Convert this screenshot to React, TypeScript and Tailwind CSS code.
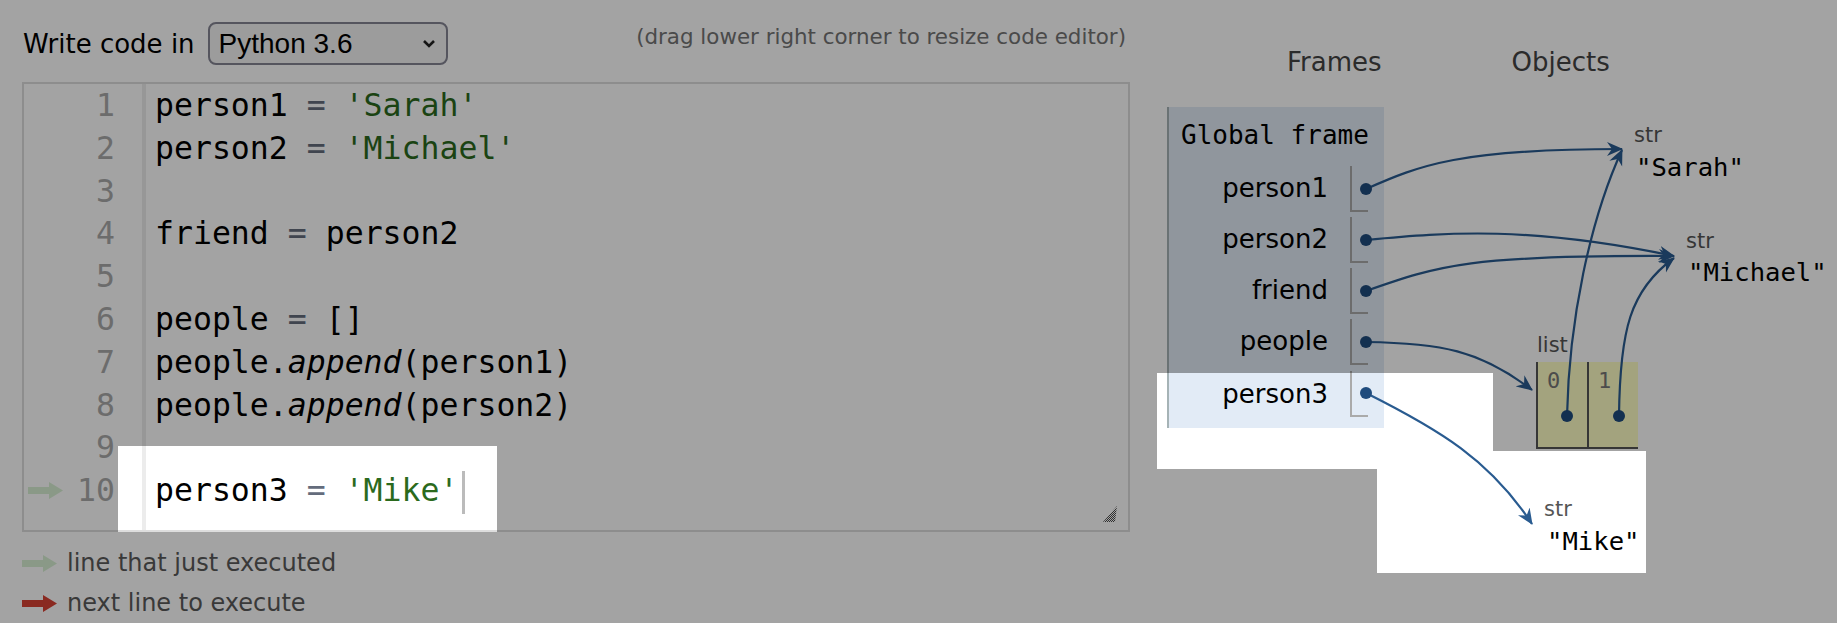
import React from "react";

const sans = "font-['DejaVu_Sans',sans-serif]";
const mono = "font-['DejaVu_Sans_Mono',monospace]";

const Op = () => <span className="text-[#646c7c]">=</span>;
const Str = ({ children }: { children: React.ReactNode }) => (
  <span className="text-[#2b6a1d]">{children}</span>
);
const Append = () => <span className="italic">append</span>;

const code: React.ReactNode[] = [
  <>person1 <Op /> <Str>'Sarah'</Str></>,
  <>person2 <Op /> <Str>'Michael'</Str></>,
  <></>,
  <>friend <Op /> person2</>,
  <></>,
  <>people <Op /> []</>,
  <>people.<Append />(person1)</>,
  <>people.<Append />(person2)</>,
  <></>,
  <>
    person3 <Op /> <Str>'Mike'</Str>
    <span className="inline-block w-[3px] h-[43px] bg-[#bbbbbb] ml-[4px] align-middle" />
  </>,
];

const LineArrow = ({ color }: { color: string }) => (
  <svg width="35" height="17" viewBox="0 0 35 17">
    <path d="M0 5H21V0L35 8.5L21 17V12H0Z" fill={color} />
  </svg>
);

const vars = ["person1", "person2", "friend", "people"];

const Bracket = () => (
  <div className="w-[18px] h-[46px] border-l-2 border-b-2 border-[#aaaaaa]" />
);

const Row = ({ name }: { name: string }) => (
  <div className="flex items-center h-[51px]">
    <div className={`${sans} text-[26px] text-black w-[181px] text-right pr-[22px]`}>{name}</div>
    <Bracket />
  </div>
);

const App = () => {
  return (
    <div className="relative w-[1837px] h-[623px] bg-white overflow-hidden flex">
      {/* code side */}
      <div className="w-[1130px] pl-[22px] pt-[22px] flex flex-col">
        <div className="flex items-center h-[43px]">
          <span className={`${sans} text-[26px] text-black ml-[1px] leading-[30px]`}>Write code in</span>
          <div className="ml-[13px] w-[240px] h-[43px] rounded-[8px] border-2 border-[#858594] bg-[#f4f4f4] flex items-center pl-[9px] pr-[10px]">
            <span className="font-['Liberation_Sans',sans-serif] text-[28px] text-black leading-[32px]">Python 3.6</span>
            <svg className="ml-auto" width="14" height="9" viewBox="0 0 14 9">
              <path d="M2 2L7 7L12 2" fill="none" stroke="#222" strokeWidth="2.6" />
            </svg>
          </div>
          <span className={`${sans} ml-auto mr-[4px] self-start mt-[2px] text-[21.4px] leading-[26px] text-[#747474]`}>
            (drag lower right corner to resize code editor)
          </span>
        </div>

        <div className="relative mt-[17px] w-[1108px] h-[450px] border-2 border-[#dddddd] flex">
          <div className={`${mono} w-[122px] border-r-4 border-[#ececec] text-[31.5px] text-[#aaaaaa]`}>
            {code.map((_, i) => (
              <div key={i} className="relative h-[42.8px] leading-[42.8px] text-right pr-[27px]">
                {i === 9 && (
                  <div className="absolute left-[4px] top-[13px]">
                    <LineArrow color="#d8f0d4" />
                  </div>
                )}
                {i + 1}
              </div>
            ))}
          </div>
          <div className={`${mono} pl-[9px] text-[31.5px] text-black`}>
            {code.map((c, i) => (
              <div key={i} className="h-[42.8px] leading-[42.8px] whitespace-pre">
                {c}
              </div>
            ))}
          </div>
          <svg className="absolute right-[10px] bottom-[8px]" width="17" height="17" viewBox="0 0 17 17">
            <defs>
              <pattern id="chk" width="2" height="2" patternUnits="userSpaceOnUse">
                <rect width="1" height="1" fill="#4a4a4a" />
                <rect x="1" y="1" width="1" height="1" fill="#4a4a4a" />
              </pattern>
            </defs>
            <path d="M16 1L2 17H14Z" fill="url(#chk)" />
          </svg>
        </div>

        <div className={`${sans} mt-[11px] text-[24px] text-[#5a5a5a]`}>
          <div className="flex items-center h-[40px] gap-[10px]">
            <LineArrow color="#d8f0d4" />
            <span>line that just executed</span>
          </div>
          <div className="flex items-center h-[40px] gap-[10px]">
            <LineArrow color="#d84235" />
            <span>next line to execute</span>
          </div>
        </div>
      </div>

      {/* visualizer side */}
      <div className="flex-1 pl-[37px] pt-[49px] flex flex-col">
        <div className={`${sans} flex text-[26px] leading-[26px] text-[#444444]`}>
          <span className="ml-[120px]">Frames</span>
          <span className="ml-[130px]">Objects</span>
        </div>
        <div className="mt-[32px] w-[217px] h-[321px] bg-[#e2ebf6] border-l-2 border-[#a6b3b6] flex flex-col">
          <div className={`${mono} text-[26px] leading-[30px] text-black pl-[12px] pt-[13px] h-[56px]`}>
            Global frame
          </div>
          {vars.map((v) => (
            <Row key={v} name={v} />
          ))}
          <div className="flex items-start h-[61px] pt-[4px]">
            <div className={`${sans} text-[26px] text-black w-[181px] text-right pr-[22px] leading-[46px]`}>person3</div>
            <Bracket />
          </div>
        </div>
      </div>

      {/* heap objects */}
      <div className={`${sans} absolute left-[1634px] top-[123px] text-[21px] leading-[24px] text-[#555555]`}>str</div>
      <div className={`${mono} absolute left-[1636px] top-[152px] text-[25.6px] leading-[30px] text-black`}>"Sarah"</div>
      <div className={`${sans} absolute left-[1686px] top-[229px] text-[21px] leading-[24px] text-[#555555]`}>str</div>
      <div className={`${mono} absolute left-[1688px] top-[257px] text-[25.6px] leading-[30px] text-black`}>"Michael"</div>
      <div className={`${sans} absolute left-[1537px] top-[333px] text-[21px] leading-[24px] text-[#555555]`}>list</div>
      <div className="absolute left-[1536px] top-[362px] flex bg-[#ffffc6]">
        {["0", "1"].map((n) => (
          <div key={n} className={`${mono} w-[51px] h-[87px] border-l-2 border-b-2 border-[#555555] pl-[9px] pt-[8px] text-[22px] leading-[22px] text-[#777777]`}>
            {n}
          </div>
        ))}
      </div>
      <div className={`${sans} absolute left-[1544px] top-[497px] text-[21px] leading-[24px] text-[#555555]`}>str</div>
      <div className={`${mono} absolute left-[1547px] top-[526px] text-[25.6px] leading-[30px] text-black`}>"Mike"</div>

      {/* pointer arrows */}
      <svg className="absolute inset-0 pointer-events-none" width="1837" height="623">
        <defs>
          <marker id="ah" viewBox="0 0 16 16" refX="15" refY="8" markerWidth="16" markerHeight="16" markerUnits="userSpaceOnUse" orient="auto">
            <path d="M0 1L16 8L0 15L5 8Z" fill="#295b90" />
          </marker>
        </defs>
        <g fill="none" stroke="#295b90" strokeWidth="2.2" markerEnd="url(#ah)">
          <path d="M1366 189C1420 165 1460 149 1622 149" />
          <path d="M1366 240C1450 232 1530 226 1674 256" />
          <path d="M1366 291C1440 265 1470 255 1674 256" />
          <path d="M1366 342C1440 343 1480 350 1532 390" />
          <path d="M1366 393C1440 430 1490 460 1532 524" />
          <path d="M1567 416C1569 320 1590 220 1622 150" />
          <path d="M1619 416C1620 330 1630 290 1674 258" />
        </g>
        <g fill="#1f4b7d">
          {[189, 240, 291, 342, 393].map((y) => (
            <circle key={y} cx="1366" cy={y} r="6" />
          ))}
          <circle cx="1567" cy="416" r="6" />
          <circle cx="1619" cy="416" r="6" />
        </g>
      </svg>

      {/* dim overlay with highlighted cutouts */}
      <svg className="absolute inset-0 pointer-events-none" width="1837" height="623">
        <path
          fillRule="evenodd"
          fill="rgba(0,0,0,0.36)"
          d="M0 0H1837V623H0Z M118 446H497V532H118Z M1157 373H1493V451H1646V573H1377V469H1157Z"
        />
      </svg>
    </div>
  );
};

export default App;
